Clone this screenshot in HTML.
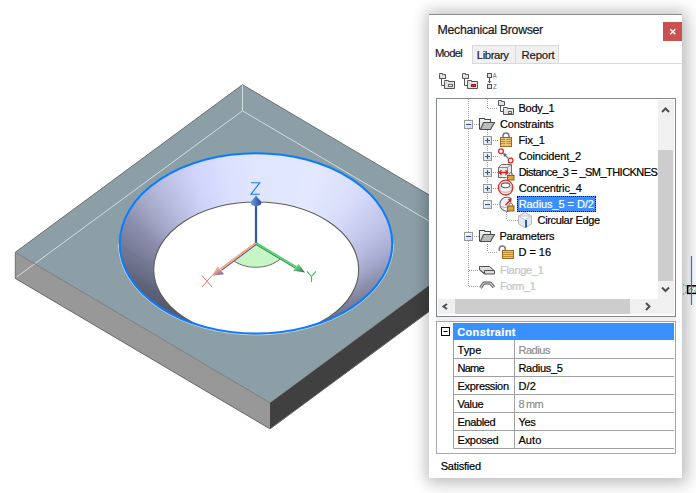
<!DOCTYPE html>
<html><head><meta charset="utf-8">
<style>
html,body{margin:0;padding:0;}
body{width:696px;height:493px;overflow:hidden;position:relative;background:#fff;font-family:"Liberation Sans",sans-serif;}
.abs{position:absolute;}
#scene{position:absolute;left:0;top:0;}
#panel{position:absolute;left:429px;top:14px;width:253px;height:464px;background:#fff;
 box-shadow:0 0 14px 3px rgba(0,0,0,0.19), 4px 4px 18px 3px rgba(0,0,0,0.12);border-top:1px solid #8c8c8c;box-sizing:border-box;}
.t{position:absolute;white-space:nowrap;font-size:11px;color:#000;line-height:13px;}
</style></head><body>
<svg id="scene" width="696" height="493" viewBox="0 0 696 493">
  <polygon points="15.3,252.3 270.0,402.8 270.0,428.9 15.3,278.4" fill="#989898"/>
  <polygon points="270.0,402.8 497.2,235.2 497.2,261.3 270.0,428.9" fill="#404040"/>
  <polygon points="15.3,252.3 242.5,84.7 497.2,235.2 270.0,402.8" fill="#8c9fa7"/>
  <g stroke="#d8e0e4" stroke-width="1" fill="none" opacity="0.95">
    <line x1="242.5" y1="84.7" x2="242.5" y2="110.8"/>
    <line x1="242.5" y1="110.8" x2="16.8" y2="276.9"/>
    <line x1="242.5" y1="110.8" x2="497.2" y2="261.3"/>
  </g>
  <polyline points="15.3,278.4 15.3,252.3 242.5,84.7 497.2,235.2" fill="none" stroke="#6a6e70" stroke-width="1"/>
  <polyline points="15.3,278.4 270.0,428.9 497.2,261.3" fill="none" stroke="#6a6a6a" stroke-width="1"/>
  <line x1="270" y1="402.8" x2="15.3" y2="252.3" stroke="#707070" stroke-width="0.8"/>
  <line x1="270" y1="402.8" x2="497.2" y2="235.2" stroke="#606060" stroke-width="0.6"/>
</svg>
<svg class="abs" style="left:0;top:0" width="696" height="493" viewBox="0 0 696 493">
  <defs>
    <clipPath id="outerclip"><ellipse cx="256" cy="243.35" rx="136.2" ry="90.1"/></clipPath>
  </defs>
  <g clip-path="url(#outerclip)">
<!--CONE-->
<polygon points="117.1,244.5 117.2,239.0 155.9,266.4 155.8,270.3" fill="#757993"/>
<polygon points="117.1,241.3 117.5,235.8 156.1,264.1 155.8,268.0" fill="#787c96"/>
<polygon points="117.3,238.1 118.0,232.6 156.4,261.8 155.9,265.7" fill="#7a7e99"/>
<polygon points="117.7,234.9 118.7,229.4 156.9,259.5 156.2,263.4" fill="#7c809c"/>
<polygon points="118.2,231.7 119.5,226.3 157.5,257.2 156.6,261.1" fill="#7f839f"/>
<polygon points="118.9,228.5 120.5,223.1 158.2,255.0 157.1,258.8" fill="#8185a1"/>
<polygon points="119.8,225.3 121.6,220.0 159.0,252.7 157.7,256.5" fill="#8488a4"/>
<polygon points="120.8,222.2 122.9,216.9 160.0,250.5 158.4,254.3" fill="#868aa7"/>
<polygon points="122.0,219.1 124.4,213.9 161.1,248.3 159.3,252.0" fill="#888caa"/>
<polygon points="123.4,216.0 126.0,210.9 162.2,246.1 160.3,249.8" fill="#8b8fad"/>
<polygon points="124.9,213.0 127.8,207.9 163.5,244.0 161.4,247.6" fill="#8e92b0"/>
<polygon points="126.6,210.0 129.8,204.9 164.9,241.9 162.6,245.5" fill="#9296b4"/>
<polygon points="128.4,207.0 131.9,202.1 166.5,239.8 163.9,243.3" fill="#969ab8"/>
<polygon points="130.4,204.1 134.1,199.2 168.1,237.7 165.4,241.2" fill="#9a9ebc"/>
<polygon points="132.5,201.2 136.5,196.4 169.8,235.7 166.9,239.2" fill="#9ea2c0"/>
<polygon points="134.8,198.4 139.1,193.7 171.7,233.8 168.6,237.1" fill="#a2a6c4"/>
<polygon points="137.3,195.6 141.8,191.0 173.6,231.8 170.4,235.1" fill="#a6aac8"/>
<polygon points="139.9,192.9 144.6,188.4 175.7,230.0 172.2,233.2" fill="#a9adcc"/>
<polygon points="142.6,190.2 147.6,185.9 177.8,228.1 174.2,231.3" fill="#acb0d0"/>
<polygon points="145.5,187.7 150.7,183.4 180.0,226.4 176.3,229.4" fill="#afb3d3"/>
<polygon points="148.5,185.1 153.9,181.0 182.4,224.6 178.5,227.6" fill="#b2b6d7"/>
<polygon points="151.6,182.7 157.3,178.7 184.8,223.0 180.7,225.8" fill="#b5b9db"/>
<polygon points="154.9,180.3 160.7,176.5 187.3,221.4 183.1,224.1" fill="#b8bcde"/>
<polygon points="158.3,178.0 164.3,174.3 189.9,219.8 185.5,222.5" fill="#bbbfe2"/>
<polygon points="161.8,175.8 168.0,172.2 192.6,218.3 188.1,220.9" fill="#bdc1e6"/>
<polygon points="165.4,173.7 171.8,170.2 195.3,216.9 190.7,219.3" fill="#c0c4e9"/>
<polygon points="169.1,171.6 175.7,168.3 198.2,215.5 193.4,217.9" fill="#c3c7ed"/>
<polygon points="173.0,169.7 179.7,166.5 201.1,214.2 196.2,216.5" fill="#c6caf0"/>
<polygon points="176.9,167.8 183.8,164.8 204.0,213.0 199.0,215.1" fill="#c9cdf3"/>
<polygon points="180.9,166.0 188.0,163.2 207.0,211.8 201.9,213.8" fill="#ccd0f7"/>
<polygon points="185.1,164.3 192.3,161.7 210.1,210.7 204.9,212.6" fill="#cfd3fa"/>
<polygon points="189.3,162.7 196.6,160.3 213.3,209.7 208.0,211.5" fill="#d1d5fc"/>
<polygon points="193.6,161.2 201.0,158.9 216.5,208.7 211.1,210.4" fill="#d2d6fc"/>
<polygon points="197.9,159.9 205.5,157.7 219.7,207.9 214.2,209.4" fill="#d3d8fd"/>
<polygon points="202.4,158.6 210.1,156.6 223.0,207.1 217.4,208.5" fill="#d5d9fd"/>
<polygon points="206.9,157.4 214.7,155.6 226.3,206.3 220.7,207.6" fill="#d6dbfd"/>
<polygon points="211.5,156.3 219.3,154.7 229.7,205.7 224.0,206.8" fill="#d7ddfd"/>
<polygon points="216.1,155.3 224.0,153.9 233.1,205.1 227.3,206.1" fill="#d9defd"/>
<polygon points="220.7,154.5 228.8,153.2 236.5,204.6 230.7,205.5" fill="#dae0fe"/>
<polygon points="225.5,153.7 233.5,152.7 240.0,204.2 234.1,205.0" fill="#dbe1fe"/>
<polygon points="230.2,153.0 238.3,152.2 243.4,203.9 237.5,204.5" fill="#dce2fe"/>
<polygon points="235.0,152.5 243.2,151.8 246.9,203.6 241.0,204.1" fill="#dde3fe"/>
<polygon points="239.8,152.1 248.0,151.6 250.4,203.5 244.5,203.8" fill="#dee4fe"/>
<polygon points="244.6,151.8 252.8,151.5 253.9,203.4 248.0,203.6" fill="#dfe5fe"/>
<polygon points="249.5,151.6 257.7,151.5 257.4,203.4 251.5,203.4" fill="#e0e6fe"/>
<polygon points="254.3,151.5 262.5,151.6 260.9,203.4 255.0,203.4" fill="#e0e6fe"/>
<polygon points="259.2,151.5 267.4,151.8 264.4,203.6 258.5,203.4" fill="#e0e6fe"/>
<polygon points="264.0,151.6 272.2,152.1 267.9,203.8 262.0,203.5" fill="#e0e6fe"/>
<polygon points="268.8,151.8 277.0,152.5 271.4,204.1 265.5,203.6" fill="#e0e6fe"/>
<polygon points="273.7,152.2 281.8,153.0 274.9,204.5 269.0,203.9" fill="#e1e7fe"/>
<polygon points="278.5,152.7 286.5,153.7 278.3,205.0 272.4,204.2" fill="#e1e7fe"/>
<polygon points="283.2,153.2 291.3,154.5 281.7,205.5 275.9,204.6" fill="#e1e7fe"/>
<polygon points="288.0,153.9 295.9,155.3 285.1,206.1 279.3,205.1" fill="#e1e7fe"/>
<polygon points="292.7,154.7 300.5,156.3 288.4,206.8 282.7,205.7" fill="#e1e7fe"/>
<polygon points="297.3,155.6 305.1,157.4 291.7,207.6 286.1,206.3" fill="#e1e7fe"/>
<polygon points="301.9,156.6 309.6,158.6 295.0,208.5 289.4,207.1" fill="#e1e7fe"/>
<polygon points="306.5,157.7 314.1,159.9 298.2,209.4 292.7,207.9" fill="#e2e8fe"/>
<polygon points="311.0,158.9 318.4,161.2 301.3,210.4 295.9,208.7" fill="#e2e8fe"/>
<polygon points="315.4,160.3 322.7,162.7 304.4,211.5 299.1,209.7" fill="#e2e8fe"/>
<polygon points="319.7,161.7 326.9,164.3 307.5,212.6 302.3,210.7" fill="#e2e8fe"/>
<polygon points="324.0,163.2 331.1,166.0 310.5,213.8 305.4,211.8" fill="#e2e7fe"/>
<polygon points="328.2,164.8 335.1,167.8 313.4,215.1 308.4,213.0" fill="#e1e6fd"/>
<polygon points="332.3,166.5 339.0,169.7 316.2,216.5 311.3,214.2" fill="#e0e5fd"/>
<polygon points="336.3,168.3 342.9,171.6 319.0,217.9 314.2,215.5" fill="#dfe4fd"/>
<polygon points="340.2,170.2 346.6,173.7 321.7,219.3 317.1,216.9" fill="#dee3fc"/>
<polygon points="344.0,172.2 350.2,175.8 324.3,220.9 319.8,218.3" fill="#dde2fc"/>
<polygon points="347.7,174.3 353.7,178.0 326.9,222.5 322.5,219.8" fill="#dce1fc"/>
<polygon points="351.3,176.5 357.1,180.3 329.3,224.1 325.1,221.4" fill="#dbdffb"/>
<polygon points="354.7,178.7 360.4,182.7 331.7,225.8 327.6,223.0" fill="#dadefb"/>
<polygon points="358.1,181.0 363.5,185.1 333.9,227.6 330.0,224.6" fill="#d9ddfa"/>
<polygon points="361.3,183.4 366.5,187.7 336.1,229.4 332.4,226.4" fill="#d8dcfa"/>
<polygon points="364.4,185.9 369.4,190.2 338.2,231.3 334.6,228.1" fill="#d6daf8"/>
<polygon points="367.4,188.4 372.1,192.9 340.2,233.2 336.7,230.0" fill="#d4d8f6"/>
<polygon points="370.2,191.0 374.7,195.6 342.0,235.1 338.8,231.8" fill="#d1d5f5"/>
<polygon points="372.9,193.7 377.2,198.4 343.8,237.1 340.7,233.8" fill="#cfd3f3"/>
<polygon points="375.5,196.4 379.5,201.2 345.5,239.2 342.6,235.7" fill="#cdd1f1"/>
<polygon points="377.9,199.2 381.6,204.1 347.0,241.2 344.3,237.7" fill="#cbcfef"/>
<polygon points="380.1,202.1 383.6,207.0 348.5,243.3 345.9,239.8" fill="#c9cded"/>
<polygon points="382.2,204.9 385.4,210.0 349.8,245.5 347.5,241.9" fill="#c6caec"/>
<polygon points="384.2,207.9 387.1,213.0 351.0,247.6 348.9,244.0" fill="#c4c8ea"/>
<polygon points="386.0,210.9 388.6,216.0 352.1,249.8 350.2,246.1" fill="#c2c6e8"/>
<polygon points="387.6,213.9 390.0,219.1 353.1,252.0 351.3,248.3" fill="#c0c4e6"/>
<polygon points="389.1,216.9 391.2,222.2 354.0,254.3 352.4,250.5" fill="#bec2e4"/>
<polygon points="390.4,220.0 392.2,225.3 354.7,256.5 353.4,252.7" fill="#bbbfe3"/>
<polygon points="391.5,223.1 393.1,228.5 355.3,258.8 354.2,255.0" fill="#b9bde1"/>
<polygon points="392.5,226.3 393.8,231.7 355.8,261.1 354.9,257.2" fill="#b7bbdf"/>
<polygon points="393.3,229.4 394.3,234.9 356.2,263.4 355.5,259.5" fill="#b4b8dc"/>
<polygon points="394.0,232.6 394.7,238.1 356.5,265.7 356.0,261.8" fill="#b1b5d9"/>
<polygon points="394.5,235.8 394.9,241.3 356.6,268.0 356.3,264.1" fill="#afb3d7"/>
<polygon points="394.8,239.0 394.9,244.5 356.6,270.3 356.5,266.4" fill="#acb0d4"/>
<polygon points="394.9,242.2 394.8,247.7 356.5,272.6 356.6,268.7" fill="#a9add1"/>
<polygon points="394.9,245.4 394.5,250.9 356.3,274.9 356.6,271.0" fill="#a7abcf"/>
<polygon points="394.7,248.6 394.0,254.1 356.0,277.2 356.5,273.3" fill="#a4a8cc"/>
<polygon points="394.3,251.8 393.3,257.3 355.5,279.5 356.2,275.6" fill="#a1a5c8"/>
<polygon points="393.8,255.0 392.5,260.4 354.9,281.8 355.8,277.9" fill="#9ea2c3"/>
<polygon points="393.1,258.2 391.5,263.6 354.2,284.0 355.3,280.2" fill="#9b9fbf"/>
<polygon points="392.2,261.4 390.4,266.7 353.4,286.3 354.7,282.5" fill="#989cbb"/>
<polygon points="391.2,264.5 389.1,269.8 352.4,288.5 354.0,284.7" fill="#9599b6"/>
<polygon points="390.0,267.6 387.6,272.8 351.3,290.7 353.1,287.0" fill="#9296b2"/>
<polygon points="388.6,270.7 386.0,275.8 350.2,292.9 352.1,289.2" fill="#8f93af"/>
<polygon points="387.1,273.7 384.2,278.8 348.9,295.0 351.0,291.4" fill="#8d91ac"/>
<polygon points="385.4,276.7 382.2,281.8 347.5,297.1 349.8,293.5" fill="#8a8ea9"/>
<polygon points="383.6,279.7 380.1,284.6 345.9,299.2 348.5,295.7" fill="#888ca6"/>
<polygon points="381.6,282.6 377.9,287.5 344.3,301.3 347.0,297.8" fill="#868aa3"/>
<polygon points="379.5,285.5 375.5,290.3 342.6,303.3 345.5,299.8" fill="#8387a0"/>
<polygon points="377.2,288.3 372.9,293.0 340.7,305.2 343.8,301.9" fill="#81859d"/>
<polygon points="374.7,291.1 370.2,295.7 338.8,307.2 342.0,303.9" fill="#7f839b"/>
<polygon points="372.1,293.8 367.4,298.3 336.7,309.0 340.2,305.8" fill="#7e8199"/>
<polygon points="369.4,296.5 364.4,300.8 334.6,310.9 338.2,307.7" fill="#7c7f97"/>
<polygon points="366.5,299.0 361.3,303.3 332.4,312.6 336.1,309.6" fill="#7a7d95"/>
<polygon points="363.5,301.6 358.1,305.7 330.0,314.4 333.9,311.4" fill="#797b93"/>
<polygon points="360.4,304.0 354.7,308.0 327.6,316.0 331.7,313.2" fill="#777991"/>
<polygon points="357.1,306.4 351.3,310.2 325.1,317.6 329.3,314.9" fill="#75778f"/>
<polygon points="353.7,308.7 347.7,312.4 322.5,319.2 326.9,316.5" fill="#73758d"/>
<polygon points="350.2,310.9 344.0,314.5 319.8,320.7 324.3,318.1" fill="#72748a"/>
<polygon points="346.6,313.0 340.2,316.5 317.1,322.1 321.7,319.7" fill="#707288"/>
<polygon points="342.9,315.1 336.3,318.4 314.2,323.5 319.0,321.1" fill="#6e7086"/>
<polygon points="339.0,317.0 332.3,320.2 311.3,324.8 316.2,322.5" fill="#6c6e84"/>
<polygon points="335.1,318.9 328.2,321.9 308.4,326.0 313.4,323.9" fill="#6a6c82"/>
<polygon points="331.1,320.7 324.0,323.5 305.4,327.2 310.5,325.2" fill="#696b80"/>
<polygon points="326.9,322.4 319.7,325.0 302.3,328.3 307.5,326.4" fill="#67697e"/>
<polygon points="192.3,325.0 185.1,322.4 204.9,326.4 210.1,328.3" fill="#585a6e"/>
<polygon points="188.0,323.5 180.9,320.7 201.9,325.2 207.0,327.2" fill="#585a6e"/>
<polygon points="183.8,321.9 176.9,318.9 199.0,323.9 204.0,326.0" fill="#585a6e"/>
<polygon points="179.7,320.2 173.0,317.0 196.2,322.5 201.1,324.8" fill="#585a6e"/>
<polygon points="175.7,318.4 169.1,315.1 193.4,321.1 198.2,323.5" fill="#585a6e"/>
<polygon points="171.8,316.5 165.4,313.0 190.7,319.7 195.3,322.1" fill="#585a6e"/>
<polygon points="168.0,314.5 161.8,310.9 188.1,318.1 192.6,320.7" fill="#585a6e"/>
<polygon points="164.3,312.4 158.3,308.7 185.5,316.5 189.9,319.2" fill="#585a6e"/>
<polygon points="160.7,310.2 154.9,306.4 183.1,314.9 187.3,317.6" fill="#585a6e"/>
<polygon points="157.3,308.0 151.6,304.0 180.7,313.2 184.8,316.0" fill="#585a6e"/>
<polygon points="153.9,305.7 148.5,301.6 178.5,311.4 182.4,314.4" fill="#585a6e"/>
<polygon points="150.7,303.3 145.5,299.0 176.3,309.6 180.0,312.6" fill="#585a6e"/>
<polygon points="147.6,300.8 142.6,296.5 174.2,307.7 177.8,310.9" fill="#595b6f"/>
<polygon points="144.6,298.3 139.9,293.8 172.2,305.8 175.7,309.0" fill="#595c70"/>
<polygon points="141.8,295.7 137.3,291.1 170.4,303.9 173.6,307.2" fill="#5a5d71"/>
<polygon points="139.1,293.0 134.8,288.3 168.6,301.9 171.7,305.2" fill="#5b5e72"/>
<polygon points="136.5,290.3 132.5,285.5 166.9,299.8 169.8,303.3" fill="#5b5f73"/>
<polygon points="134.1,287.5 130.4,282.6 165.4,297.8 168.1,301.3" fill="#5c6074"/>
<polygon points="131.9,284.6 128.4,279.7 163.9,295.7 166.5,299.2" fill="#5d6175"/>
<polygon points="129.8,281.8 126.6,276.7 162.6,293.5 164.9,297.1" fill="#5e6278"/>
<polygon points="127.8,278.8 124.9,273.7 161.4,291.4 163.5,295.0" fill="#60647a"/>
<polygon points="126.0,275.8 123.4,270.7 160.3,289.2 162.2,292.9" fill="#62667c"/>
<polygon points="124.4,272.8 122.0,267.6 159.3,287.0 161.1,290.7" fill="#64687e"/>
<polygon points="122.9,269.8 120.8,264.5 158.4,284.7 160.0,288.5" fill="#656981"/>
<polygon points="121.6,266.7 119.8,261.4 157.7,282.5 159.0,286.3" fill="#676b83"/>
<polygon points="120.5,263.6 118.9,258.2 157.1,280.2 158.2,284.0" fill="#696d85"/>
<polygon points="119.5,260.4 118.2,255.0 156.6,277.9 157.5,281.8" fill="#6b6f88"/>
<polygon points="118.7,257.3 117.7,251.8 156.2,275.6 156.9,279.5" fill="#6d718a"/>
<polygon points="118.0,254.1 117.3,248.6 155.9,273.3 156.4,277.2" fill="#6f738c"/>
<polygon points="117.5,250.9 117.1,245.4 155.8,271.0 156.1,274.9" fill="#71758f"/>
<polygon points="117.2,247.7 117.1,242.2 155.8,268.7 155.9,272.6" fill="#737791"/>
<!--/CONE-->
    <ellipse cx="256.2" cy="269.5" rx="102.5" ry="67.5" fill="#fff" stroke="#5c5c5c" stroke-width="1.1"/>
  </g>
  <path d="M393.7,243.35 A137.7,91.6 0 0 1 118.3,243.35" fill="none" stroke="#d0dadd" stroke-width="1" opacity="0.8"/>
  <ellipse cx="256" cy="243.35" rx="136.2" ry="90.1" fill="none" stroke="#0a7cff" stroke-width="2"/>
  <!-- axis gizmo -->
  <defs>
   <linearGradient id="zg" x1="0" y1="0" x2="1" y2="0"><stop offset="0" stop-color="#6aa6d4"/><stop offset="1" stop-color="#2448a0"/></linearGradient>
   <linearGradient id="xg" x1="0" y1="0" x2="1" y2="1"><stop offset="0.35" stop-color="#f6b080"/><stop offset="1" stop-color="#5a48a8"/></linearGradient>
   <linearGradient id="yg" x1="0" y1="0" x2="1" y2="1"><stop offset="0.3" stop-color="#70d080"/><stop offset="1" stop-color="#1a7050"/></linearGradient>
  </defs>
  <path d="M256,243.6 L234.4,261.3 C247.6,270 268,269.1 279.9,259.3 Z" fill="#c6f6c6" stroke="none"/>
  <path d="M234.4,261.3 C247.6,270 268,269.1 279.9,259.3" fill="none" stroke="#6a6a6a" stroke-width="1"/>
  <line x1="256" y1="243.6" x2="256" y2="203" stroke="#2a5aa8" stroke-width="2.2"/>
  <path d="M256,195.2 C257,198 261.4,200.5 261.4,202.7 C261.4,205 258.5,206 256,206 C253.5,206 250.7,205 250.7,202.7 C250.7,200.5 255,198 256,195.2 Z" fill="url(#zg)"/>
  <line x1="256.4" y1="244.3" x2="221.4" y2="270.3" stroke="#5848a8" stroke-width="1.2"/>
  <line x1="255.6" y1="243.1" x2="220.6" y2="269.1" stroke="#f2a878" stroke-width="2"/>
  <path d="M212,275.8 L217.6,266.6 L224,274.2 Z" fill="url(#xg)"/>
  <line x1="255.8" y1="244.3" x2="295.8" y2="268.3" stroke="#2a8a58" stroke-width="1.2"/>
  <line x1="256.4" y1="243.1" x2="296.4" y2="267.1" stroke="#5cd070" stroke-width="2"/>
  <path d="M305,272.6 L293.2,270.8 L298.4,263.8 Z" fill="url(#yg)"/>
  <!-- labels -->
  <path d="M251,182.7 H259.8 L251,194.3 H259.8" fill="none" stroke="#1a7aff" stroke-width="1.1"/>
  <path d="M202,275.5 L212,287 M212,275.5 L202,287" fill="none" stroke="#f07878" stroke-width="1"/>
  <path d="M307,271.3 L311.5,276.5 L316,271.3 M311.5,276.5 V282" fill="none" stroke="#20d040" stroke-width="1.1"/>
</svg>

<div id="panel"></div>
<div class="abs" style="left:436px;top:317px;width:240px;height:4px;background:#f0f0f0"></div>
<!-- close -->
<div class="abs" style="left:663px;top:22px;width:19px;height:19px;background:#c85250"></div>
<svg class="abs" style="left:663px;top:22px" width="19" height="19"><path d="M7.3,7.3 L12.3,12.3 M12.3,7.3 L7.3,12.3" stroke="#fff" stroke-width="1.5"/></svg>
<!-- tabs -->
<div class="abs" style="left:472px;top:45px;width:87px;height:18px;background:#f0f0f0;border:1px solid #d9d9d9;border-bottom:none;box-sizing:border-box"></div>
<div class="abs" style="left:515px;top:45px;width:1px;height:18px;background:#d9d9d9"></div>
<div class="abs" style="left:472px;top:63px;width:210px;height:1px;background:#d9d9d9"></div>
<!-- toolbar icons -->
<svg class="abs" style="left:436px;top:68px" width="70" height="28" viewBox="436 68 70 28">
 <g stroke="#555" fill="#dfe2e5" stroke-width="1">
  <path d="M439.5,74.5 v-1 h3 v1 h3 v4 h-6 z"/>
  <path d="M441.5,79 v6.5 h3" fill="none"/>
  <path d="M444.5,81.5 v-1 h4 v1 h6 v7 h-10 z"/>
  <rect x="448.5" y="84.5" width="4" height="2" fill="#fff" stroke="#666"/>
  <path d="M462.5,74.5 v-1 h3 v1 h3 v4 h-6 z"/>
  <path d="M464.5,79 v6.5 h3" fill="none"/>
  <path d="M467.5,81.5 v-1 h4 v1 h6 v7 h-10 z"/>
  <rect x="471.5" y="84.5" width="4" height="2" fill="#e02020" stroke="#b01818"/>
  <rect x="487.5" y="73.5" width="4" height="4"/>
  <rect x="487.5" y="84.5" width="4" height="4"/>
 </g>
 <path d="M489.5,78 v4" stroke="#555"/>
 <path d="M487.8,81 L489.5,83.5 L491.2,81 z" fill="#555"/>
 <text x="492.6" y="78.3" font-size="6.3" fill="#6a6a6a" font-family="Liberation Sans">A</text>
 <text x="493" y="89.2" font-size="6.3" fill="#6a6a6a" font-family="Liberation Sans">Z</text>
</svg>
<!-- tree box -->
<div class="abs" style="left:436px;top:98px;width:240px;height:219px;border:1px solid #828790;box-sizing:border-box;background:#fff"></div>
<!-- selection highlight -->
<div class="abs" style="left:517px;top:196px;width:79px;height:16px;background:#3891ff;outline:1px dotted #000;outline-offset:-1px"></div>
<!-- tree lines & icons -->
<svg class="abs" style="left:436px;top:98px" width="222" height="201" viewBox="436 98 222 201">
 <g stroke="#a0a0a0" stroke-width="1" stroke-dasharray="1 1" fill="none">
  <path d="M468.5,99 V287"/>
  <path d="M487.5,99 V108"/><path d="M488,108.5 H498"/>
  <path d="M474,124.5 H479"/>
  <path d="M487.5,130 V204"/>
  <path d="M493,140.5 H499 M493,156.5 H499 M493,172.5 H499 M493,188.5 H499 M493,204.5 H498"/>
  <path d="M506.5,212 V220"/><path d="M507,220.5 H518"/>
  <path d="M474,236.5 H479"/>
  <path d="M487.5,244 V252"/><path d="M488,252.5 H498"/>
  <path d="M469,270.5 H479 M469,286.5 H479"/>
 </g>
 <!-- expander boxes -->
 <defs>
  <linearGradient id="exg" x1="0" y1="0" x2="1" y2="1"><stop offset="0" stop-color="#ffffff"/><stop offset="1" stop-color="#d6d6d6"/></linearGradient>
 </defs>
 <g stroke="#979797" fill="url(#exg)">
  <rect x="464.5" y="120.5" width="8" height="8"/>
  <rect x="483.5" y="136.5" width="8" height="8"/>
  <rect x="483.5" y="152.5" width="8" height="8"/>
  <rect x="483.5" y="168.5" width="8" height="8"/>
  <rect x="483.5" y="184.5" width="8" height="8"/>
  <rect x="483.5" y="200.5" width="8" height="8"/>
  <rect x="464.5" y="232.5" width="8" height="8"/>
 </g>
 <g stroke="#3b5998" stroke-width="1.1">
  <path d="M466,124.5 H471"/>
  <path d="M485,140.5 H490 M487.5,138 V143"/>
  <path d="M485,156.5 H490 M487.5,154 V159"/>
  <path d="M485,172.5 H490 M487.5,170 V175"/>
  <path d="M485,188.5 H490 M487.5,186 V191"/>
  <path d="M485,204.5 H490"/>
  <path d="M466,236.5 H471"/>
 </g>
 <!-- Body_1 icon -->
 <g stroke="#555" fill="#dfe2e5" stroke-width="1">
  <path d="M498.5,101.5 v-1 h3 v1 h3 v4 h-6 z"/>
  <path d="M500.5,106 v5.5 h3" fill="none"/>
  <path d="M503.5,108.5 v-1 h4 v1 h6 v6 h-10 z"/>
  <rect x="508.5" y="111.5" width="3" height="2" fill="#fff" stroke="#666"/>
 </g>
 <!-- folders -->
 <g stroke="#4c4c4c" stroke-width="1.1">
  <path d="M479.5,129.5 v-11 h5 l0.5,1 h5.5 v3" fill="#eceef0"/>
  <path d="M480.5,129.5 l3,-7 h11 l-4,7 z" fill="#b8bcc2"/>
  <path d="M479.5,241.5 v-11 h5 l0.5,1 h5.5 v3" fill="#eceef0"/>
  <path d="M480.5,241.5 l3,-7 h11 l-4,7 z" fill="#b8bcc2"/>
 </g>
 <!-- lock Fix_1 -->
 <path d="M503,138 v-2 a3,3 0 0 1 6,0 v2" stroke="#7a7a7a" stroke-width="1.6" fill="none"/>
 <rect x="500.5" y="137.5" width="11" height="9" fill="#e8c070" stroke="#9a6a20"/>
 <path d="M501,139.5 h10 M501,141.5 h10 M501,143.5 h10" stroke="#c08a30" stroke-width="0.9"/>
 <path d="M506,138 v8" stroke="#f4dca0" stroke-width="0.8"/>
 <!-- coincident -->
 <circle cx="501" cy="151.2" r="2.4" fill="#fff" stroke="#e02020" stroke-width="1.2"/>
 <circle cx="510.6" cy="160.5" r="2.4" fill="#fff" stroke="#e02020" stroke-width="1.2"/>
 <path d="M508.3,158.2 L505,155" stroke="#707070" stroke-width="1.2"/>
 <path d="M503.2,153.2 L507,154 L504,157 z" fill="#606060"/>
 <!-- distance -->
 <path d="M498.5,177.5 v-10 l3,-3 h10 v10" fill="#e8e8e8" stroke="#6a6a6a"/>
 <path d="M498.5,167.5 h9 l4,-3" fill="none" stroke="#8a8a8a"/>
 <path d="M507.5,167.5 v6" fill="none" stroke="#8a8a8a"/>
 <path d="M498.5,177.5 h8" fill="none" stroke="#6a6a6a"/>
 <path d="M499.5,172.5 h8 M501.5,170.3 l-2.2,2.2 2.2,2.2 M505.5,170.3 l2.2,2.2 -2.2,2.2" stroke="#e02020" stroke-width="1.3" fill="none"/>
 <path d="M509,175.5 v-1 a1.8,1.8 0 0 1 3.6,0 v1" stroke="#777" stroke-width="1" fill="none"/>
 <rect x="507.5" y="175.5" width="6.5" height="4.5" fill="#d8a840" stroke="#8a6020"/>
 <!-- concentric -->
 <ellipse cx="505.6" cy="187.6" rx="7.2" ry="7.4" fill="#f0f0f0" stroke="#e03030" stroke-width="1.3"/>
 <ellipse cx="505.6" cy="185.3" rx="4.3" ry="2.4" fill="#fbfbfb" stroke="#606060" stroke-width="1.1"/>
 <path d="M500,186 v3.5 a5.6,2.8 0 0 0 11.2,0 v-3.5" fill="none" stroke="#b0b0b0"/>
 <!-- radius -->
 <path d="M511.5,199 a7,7 0 1 0 0.5,10" fill="#f2f2f2" stroke="#6a6a6a" stroke-width="1.1"/>
 <path d="M500,205 a5.5,2.5 0 0 0 7,2.3" fill="none" stroke="#b0b0b0"/>
 <path d="M505.5,205 l4.5,-4.5" stroke="#e02020" stroke-width="1.4" fill="none"/>
 <path d="M511.5,198.8 l-0.5,4 -3.5,-3.5 z" fill="#e02020"/>
 <path d="M509,206 v-1 a1.8,1.8 0 0 1 3.6,0 v1" stroke="#777" stroke-width="1" fill="none"/>
 <rect x="507.5" y="206" width="6.5" height="5" fill="#d8a840" stroke="#8a6020"/>
 <!-- circular edge cube -->
 <path d="M518.5,216 l6.5,-3.7 l6.5,3.7 v8 l-6.5,3.7 l-6.5,-3.7 z" fill="#e6e9ec" stroke="#b8bcc0"/>
 <path d="M518.5,216 l6.5,3.7 l6.5,-3.7 z" fill="#fafafa" stroke="#c4c8cc"/>
 <path d="M526,220 v7.5" stroke="#1f5fc8" stroke-width="2"/>
 <!-- D=16 lock open -->
 <path d="M499.3,251 v-2 a3,3 0 0 1 6,0 v1" stroke="#7a7a7a" stroke-width="1.5" fill="none"/>
 <rect x="502.5" y="250.5" width="11" height="8" fill="#e8c070" stroke="#9a6a20"/>
 <path d="M503,252.5 h10 M503,254.5 h10 M503,256.5 h10" stroke="#c08a30" stroke-width="0.9"/>
 <!-- flange -->
 <path d="M479.5,266.5 h10 l5,4.5 v3 h-10 l-5,-4 z" fill="#dcdcdc" stroke="#505050"/>
 <path d="M479.5,266.5 v3 l5,4 M484.5,270.5 h10 M484.5,270.5 v3.5" fill="none" stroke="#505050"/>
 <!-- form -->
 <path d="M480.5,287.8 L483.8,283 H490.2 L494,287.3" fill="none" stroke="#505050" stroke-width="3" stroke-linejoin="round"/>
 <path d="M480.5,287.8 L483.8,283 H490.2 L494,287.3" fill="none" stroke="#dcdcdc" stroke-width="1.2" stroke-linejoin="round"/>
</svg>
<!-- scrollbars -->
<div class="abs" style="left:658px;top:100px;width:16px;height:199px;background:#f0f0f0"></div>
<div class="abs" style="left:658px;top:150px;width:15px;height:131px;background:#cdcdcd"></div>
<div class="abs" style="left:438px;top:299px;width:236px;height:15px;background:#f0f0f0"></div>
<div class="abs" style="left:455px;top:299px;width:175px;height:15px;background:#cdcdcd"></div>
<svg class="abs" style="left:436px;top:98px" width="240" height="219" viewBox="0 0 240 219">
 <g fill="none" stroke="#505050" stroke-width="2">
  <path d="M226,14 L229.5,10.5 L233,14"/>
  <path d="M226,189.5 L229.5,193 L233,189.5"/>
  <path d="M11,206 L7.5,208.5 L11,211" />
  <path d="M210,205 L213.5,208.5 L210,212"/>
 </g>
</svg>
<!-- property grid -->
<div class="abs" style="left:436px;top:321px;width:240px;height:133px;border:1px solid #a4a8b2;box-sizing:border-box;background:#fff"></div>
<div class="abs" style="left:453px;top:323px;width:221px;height:17px;background:#3891ff"></div>
<svg class="abs" style="left:436px;top:321px" width="240" height="133" viewBox="436 321 240 133">
 <rect x="441.5" y="327.5" width="8" height="8" fill="#fff" stroke="#000"/>
 <path d="M443.5,331.5 h4" stroke="#000"/>
 <g stroke="#a0a0a0" fill="none">
  <path d="M453.5,340 V448.5 H674"/>
  <path d="M514.5,340 V448"/>
  <path d="M453.5,358.5 H674 M453.5,376.5 H674 M453.5,394.5 H674 M453.5,412.5 H674 M453.5,430.5 H674"/>

 </g>
</svg>
<div class="t" style="left:437.6px;top:22.64px;font-size:12.3px;line-height:14px;color:#1a1a1a;letter-spacing:-0.301px;-webkit-text-stroke:0.2px #1a1a1a">Mechanical Browser</div>
<div class="t" style="left:434.9px;top:46.08px;font-size:11.3px;line-height:14px;color:#1a1a1a;letter-spacing:-0.696px;-webkit-text-stroke:0.2px #1a1a1a">Model</div>
<div class="t" style="left:476.8px;top:47.88px;font-size:11.3px;line-height:14px;color:#1a1a1a;letter-spacing:-0.404px;-webkit-text-stroke:0.2px #1a1a1a">Library</div>
<div class="t" style="left:521.6px;top:47.78px;font-size:11.3px;line-height:14px;color:#1a1a1a;letter-spacing:-0.154px;-webkit-text-stroke:0.2px #1a1a1a">Report</div>
<div class="t" style="left:518.5px;top:100.99px;font-size:11px;line-height:14px;color:#000;letter-spacing:-0.252px;-webkit-text-stroke:0.2px #000">Body_1</div>
<div class="t" style="left:500.0px;top:116.99px;font-size:11px;line-height:14px;color:#000;letter-spacing:-0.176px;-webkit-text-stroke:0.2px #000">Constraints</div>
<div class="t" style="left:518.5px;top:132.99px;font-size:11px;line-height:14px;color:#000;letter-spacing:-0.141px;-webkit-text-stroke:0.2px #000">Fix_1</div>
<div class="t" style="left:518.7px;top:148.99px;font-size:11px;line-height:14px;color:#000;letter-spacing:-0.160px;-webkit-text-stroke:0.2px #000">Coincident_2</div>
<div class="t" style="left:518.7px;top:164.99px;font-size:11px;line-height:14px;color:#000;letter-spacing:-0.529px;-webkit-text-stroke:0.2px #000;width:139.3px;overflow:hidden">Distance_3 = _SM_THICKNESS</div>
<div class="t" style="left:518.7px;top:180.99px;font-size:11px;line-height:14px;color:#000;letter-spacing:-0.152px;-webkit-text-stroke:0.2px #000">Concentric_4</div>
<div class="t" style="left:518.7px;top:196.99px;font-size:11px;line-height:14px;color:#fff;letter-spacing:-0.067px;-webkit-text-stroke:0.2px #fff">Radius_5 = D/2</div>
<div class="t" style="left:537.6px;top:212.99px;font-size:11px;line-height:14px;color:#000;letter-spacing:-0.349px;-webkit-text-stroke:0.2px #000">Circular Edge</div>
<div class="t" style="left:499.4px;top:228.99px;font-size:11px;line-height:14px;color:#000;letter-spacing:-0.196px;-webkit-text-stroke:0.2px #000">Parameters</div>
<div class="t" style="left:518.5px;top:244.99px;font-size:11px;line-height:14px;color:#000;letter-spacing:-0.036px;-webkit-text-stroke:0.2px #000">D = 16</div>
<div class="t" style="left:500.0px;top:263.19px;font-size:11px;line-height:14px;color:#c4c4c4;letter-spacing:-0.284px;-webkit-text-stroke:0.2px #c4c4c4">Flange_1</div>
<div class="t" style="left:500.0px;top:279.19px;font-size:11px;line-height:14px;color:#c4c4c4;letter-spacing:-0.384px;-webkit-text-stroke:0.2px #c4c4c4">Form_1</div>
<div class="t" style="left:457.2px;top:324.89px;font-size:11px;line-height:14px;color:#fff;letter-spacing:0.370px;font-weight:bold;-webkit-text-stroke:0.2px #fff">Constraint</div>
<div class="t" style="left:457.6px;top:343.29px;font-size:11px;line-height:14px;color:#000;letter-spacing:-0.065px;-webkit-text-stroke:0.2px #000">Type</div>
<div class="t" style="left:518.4px;top:343.29px;font-size:11px;line-height:14px;color:#8c8c8c;letter-spacing:-0.442px;-webkit-text-stroke:0.2px #8c8c8c">Radius</div>
<div class="t" style="left:457.6px;top:361.39px;font-size:11px;line-height:14px;color:#000;letter-spacing:-0.786px;-webkit-text-stroke:0.2px #000">Name</div>
<div class="t" style="left:518.4px;top:361.39px;font-size:11px;line-height:14px;color:#000;letter-spacing:-0.273px;-webkit-text-stroke:0.2px #000">Radius_5</div>
<div class="t" style="left:457.6px;top:379.09px;font-size:11px;line-height:14px;color:#000;letter-spacing:-0.332px;-webkit-text-stroke:0.2px #000">Expression</div>
<div class="t" style="left:518.4px;top:379.09px;font-size:11px;line-height:14px;color:#000;letter-spacing:0.192px;-webkit-text-stroke:0.2px #000">D/2</div>
<div class="t" style="left:457.6px;top:396.79px;font-size:11px;line-height:14px;color:#000;letter-spacing:-0.346px;-webkit-text-stroke:0.2px #000">Value</div>
<div class="t" style="left:518.4px;top:396.79px;font-size:11px;line-height:14px;color:#8c8c8c;letter-spacing:-0.725px;-webkit-text-stroke:0.2px #8c8c8c">8 mm</div>
<div class="t" style="left:457.6px;top:414.79px;font-size:11px;line-height:14px;color:#000;letter-spacing:-0.382px;-webkit-text-stroke:0.2px #000">Enabled</div>
<div class="t" style="left:518.4px;top:414.79px;font-size:11px;line-height:14px;color:#000;letter-spacing:-0.284px;-webkit-text-stroke:0.2px #000">Yes</div>
<div class="t" style="left:457.6px;top:432.89px;font-size:11px;line-height:14px;color:#000;letter-spacing:-0.302px;-webkit-text-stroke:0.2px #000">Exposed</div>
<div class="t" style="left:518.4px;top:432.89px;font-size:11px;line-height:14px;color:#000;letter-spacing:0.115px;-webkit-text-stroke:0.2px #000">Auto</div>
<div class="t" style="left:440.7px;top:458.69px;font-size:11px;line-height:14px;color:#000;letter-spacing:-0.223px;-webkit-text-stroke:0.2px #000">Satisfied</div>
<!-- small gizmo at right edge -->
<svg class="abs" style="left:680px;top:250px" width="16" height="60" viewBox="680 250 16 60">
 <path d="M683,284.5 L696,291.5" stroke="#30b040" stroke-width="1" stroke-dasharray="1.5 1"/>
 <path d="M683,294.5 L696,285.5" stroke="#e04040" stroke-width="1" stroke-dasharray="1.5 1"/>
 <rect x="687.6" y="285.8" width="9" height="7.6" fill="none" stroke="#000" stroke-width="1.5"/>
 <line x1="691.5" y1="256" x2="691.5" y2="305" stroke="#1a7ae0" stroke-width="1.2"/>
</svg>

</body></html>
